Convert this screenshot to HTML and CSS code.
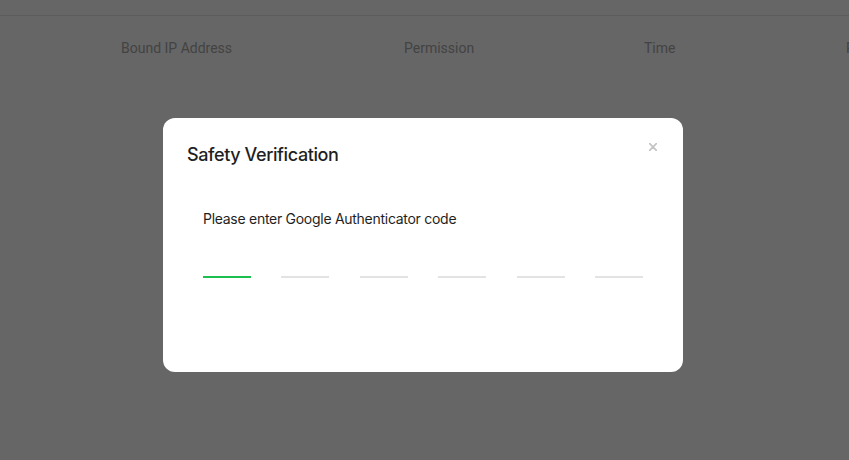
FILE: index.html
```html
<!DOCTYPE html>
<html lang="en">
<head>
<meta charset="utf-8">
<title>Safety Verification</title>
<link rel="stylesheet" href="styles.css">
</head>
<body>
<div class="page">
  <div class="topbar"></div>
  <div class="thead">
    <div class="th c1">Bound IP Address</div>
    <div class="th c2">Permission</div>
    <div class="th c3">Time</div>
    <div class="th c4">Remark</div>
  </div>
</div>
<div class="overlay">
  <div class="modal">
    <button class="close" aria-label="Close">
      <svg width="8" height="8" viewBox="0 0 8 8"><path d="M0.7 0.7L7.3 7.3M7.3 0.7L0.7 7.3" stroke="#c4c4c4" stroke-width="1.7" stroke-linecap="round"/></svg>
    </button>
    <h2 class="title">Safety Verification</h2>
    <div class="body">
      <p class="label">Please enter Google Authenticator code</p>
      <div class="codes">
        <div class="cell active"></div>
        <div class="cell"></div>
        <div class="cell"></div>
        <div class="cell"></div>
        <div class="cell"></div>
        <div class="cell"></div>
      </div>
    </div>
  </div>
</div>
</body>
</html>
```
FILE: styles.css
```css
html, body {
  margin: 0;
  padding: 0;
  width: 849px;
  height: 460px;
  overflow: hidden;
  background: #ffffff;
  font-family: Roboto, "Noto Sans", sans-serif;
}
.page {
  width: 849px;
  height: 460px;
  overflow: hidden;
}
.topbar {
  height: 15px;
  border-bottom: 1px solid #e6e6e6;
}
.thead {
  display: grid;
  grid-template-columns: 283px 240px 202px 3px;
  padding-left: 121px;
  padding-top: 22px;
  white-space: nowrap;
}
.th {
  font-size: 14px;
  line-height: 20px;
  color: #a8a8a8;
  overflow: hidden;
}
.overlay {
  position: fixed;
  inset: 0;
  background: rgba(0, 0, 0, 0.6);
  padding: 118px 0 0 163px;
  box-sizing: border-box;
}
.modal {
  position: relative;
  width: 520px;
  height: 254px;
  box-sizing: border-box;
  background: #ffffff;
  border-radius: 12px;
  padding: 25px 24px 0 24px;
  font-family: Inter, "Noto Sans", sans-serif;
}
.close {
  position: absolute;
  top: 25px;
  right: 26px;
  width: 8px;
  height: 8px;
  padding: 0;
  border: 0;
  background: none;
  display: flex;
}
.title {
  margin: 0;
  font-size: 18px;
  line-height: 24px;
  font-weight: 500;
  color: #1f1f1f;
  letter-spacing: -0.4px;
}
.body {
  padding: 0 16px;
  margin-top: 42px;
}
.label {
  margin: 0;
  font-size: 14px;
  line-height: 20px;
  color: #1f1f1f;
  letter-spacing: -0.28px;
}
.codes {
  display: flex;
  justify-content: space-between;
  margin-top: 9px;
}
.cell {
  width: 48px;
  height: 38px;
  border-bottom: 2px solid #e3e3e3;
}
.cell.active {
  border-bottom-color: #1dbf4e;
}
```
